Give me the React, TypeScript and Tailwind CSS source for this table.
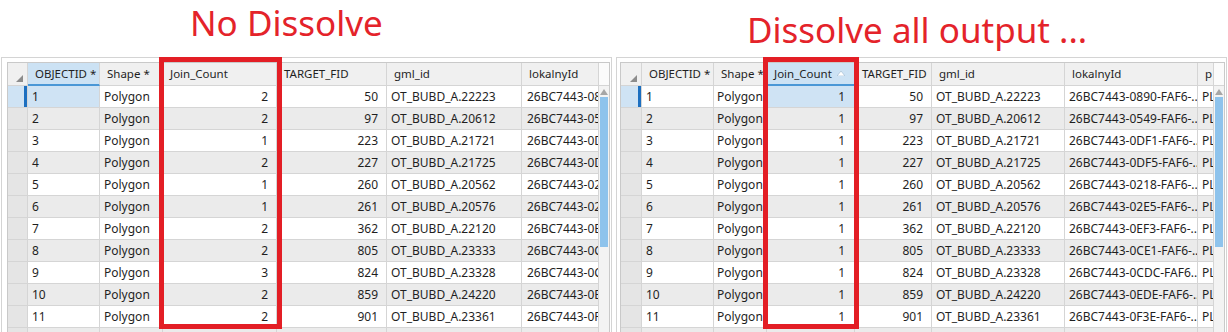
import React from "react";

type Col = {
  key: string;
  w: string;
  h?: string;
  align?: "l" | "r";
  clipRight?: boolean;
  pad?: string;
};

type Row = {
  oid: string;
  shape: string;
  jc: string;
  tfid: string;
  gml: string;
  lok: string;
  p: string;
};

const base: Omit<Row, "jc">[] = [
  { oid: "1", shape: "Polygon", tfid: "50", gml: "OT_BUBD_A.22223", lok: "26BC7443-0890-FAF6-...", p: "PL" },
  { oid: "2", shape: "Polygon", tfid: "97", gml: "OT_BUBD_A.20612", lok: "26BC7443-0549-FAF6-...", p: "PL" },
  { oid: "3", shape: "Polygon", tfid: "223", gml: "OT_BUBD_A.21721", lok: "26BC7443-0DF1-FAF6-...", p: "PL" },
  { oid: "4", shape: "Polygon", tfid: "227", gml: "OT_BUBD_A.21725", lok: "26BC7443-0DF5-FAF6-...", p: "PL" },
  { oid: "5", shape: "Polygon", tfid: "260", gml: "OT_BUBD_A.20562", lok: "26BC7443-0218-FAF6-...", p: "PL" },
  { oid: "6", shape: "Polygon", tfid: "261", gml: "OT_BUBD_A.20576", lok: "26BC7443-02E5-FAF6-...", p: "PL" },
  { oid: "7", shape: "Polygon", tfid: "362", gml: "OT_BUBD_A.22120", lok: "26BC7443-0EF3-FAF6-...", p: "PL" },
  { oid: "8", shape: "Polygon", tfid: "805", gml: "OT_BUBD_A.23333", lok: "26BC7443-0CE1-FAF6-...", p: "PL" },
  { oid: "9", shape: "Polygon", tfid: "824", gml: "OT_BUBD_A.23328", lok: "26BC7443-0CDC-FAF6...", p: "PL" },
  { oid: "10", shape: "Polygon", tfid: "859", gml: "OT_BUBD_A.24220", lok: "26BC7443-0EDE-FAF6-...", p: "PL" },
  { oid: "11", shape: "Polygon", tfid: "901", gml: "OT_BUBD_A.23361", lok: "26BC7443-0F3E-FAF6-...", p: "PL" },
  { oid: "", shape: "", tfid: "", gml: "", lok: "", p: "" },
];

const leftJc = ["2", "2", "1", "2", "1", "1", "2", "2", "3", "2", "2", ""];

const leftRows: Row[] = base.map((r, i) => ({ ...r, jc: leftJc[i] }));
const rightRows: Row[] = base.map((r, i) => ({ ...r, jc: i < 11 ? "1" : "" }));

const leftCols: Col[] = [
  { key: "oid", w: "w-[72px]", h: "OBJECTID *", pad: "px-[4px]" },
  { key: "shape", w: "w-[63px]", h: "Shape *", pad: "px-[4px]" },
  { key: "jc", w: "w-[114px]", h: "Join_Count", align: "r", pad: "justify-end pr-[8px] pl-[4px]" },
  { key: "tfid", w: "w-[110px]", h: "TARGET_FID", align: "r", pad: "justify-end pr-[8px] pl-[4px]" },
  { key: "gml", w: "w-[135px]", h: "gml_id", pad: "px-[4px]" },
  { key: "lok", w: "w-[77px]", h: "lokalnyId", clipRight: true, pad: "pl-[5px]" },
];

const rightCols: Col[] = [
  { key: "oid", w: "w-[72px]", h: "OBJECTID *", pad: "px-[4px]" },
  { key: "shape", w: "w-[53px]", h: "Shape *", pad: "pl-[3px]" },
  { key: "jc", w: "w-[88px]", h: "Join_Count", align: "r", pad: "justify-end pr-[9px] pl-[4px]" },
  { key: "tfid", w: "w-[77px]", h: "TARGET_FID", align: "r", pad: "justify-end pr-[8px] pl-[4px]" },
  { key: "gml", w: "w-[133px]", h: "gml_id", pad: "px-[4px]" },
  { key: "lok", w: "w-[133px]", h: "lokalnyId", pad: "px-[4px]" },
  { key: "p", w: "w-[16px]", h: "p", clipRight: true, pad: "pl-[4px]" },
];

function CornerTriangle() {
  return (
    <svg width="7" height="7" viewBox="0 0 7 7" className="absolute right-[4px] bottom-[3px]">
      <polygon points="0,7 7,7 7,0" fill="#8c8c8c" />
    </svg>
  );
}

function SortArrow() {
  return (
    <svg width="8" height="5" viewBox="0 0 8 5" className="ml-[5px] mb-[1px] shrink-0">
      <polygon points="0,5 8,5 4,0" fill="#ffffff" stroke="#9bb7cf" strokeWidth="0.6" />
    </svg>
  );
}

function Table({
  cols,
  rows,
  activeKey,
  selW,
  sorted,
}: {
  cols: Col[];
  rows: Row[];
  activeKey: string;
  selW: string;
  sorted?: boolean;
}) {
  return (
    <div className="flex flex-col">
      {/* header */}
      <div className="flex h-[23px] text-[11.5px]">
        <div className={`${selW} shrink-0 relative bg-[#f0f0f0] border-r border-b border-[#d5d5d5]`}>
          <CornerTriangle />
        </div>
        {cols.map((c) => {
          const active = c.key === activeKey;
          return (
            <div
              key={c.key}
              className={`${c.w} shrink-0 flex items-center overflow-hidden whitespace-nowrap border-r ${
                active
                  ? "bg-[#cce2f4] border-b-2 border-b-[#4a97d6] border-r-[#d5d5d5]"
                  : "bg-[#f0f0f0] border-b border-[#d5d5d5]"
              } ${c.clipRight ? "pl-[7px]" : "px-[7px]"}`}
            >
              <span>{c.h}</span>
              {active && sorted ? <SortArrow /> : null}
            </div>
          );
        })}
        <div className="w-[10px] shrink-0 bg-[#fbfbfb] border-b border-[#d5d5d5]" />
      </div>
      {/* body */}
      <div className="flex text-[12px]">
        <div className="flex flex-col">
          {rows.map((r, i) => {
            const even = i % 2 === 1;
            const first = i === 0;
            return (
              <div
                key={i}
                className={`flex h-[22px] border-b border-[#d5d5d5] ${even ? "bg-[#ebebeb]" : "bg-white"}`}
              >
                <div
                  className={`${selW} shrink-0 flex justify-end border-r border-[#d5d5d5] ${
                    first ? "bg-[#cfe3f4]" : "bg-[#e5e5e5]"
                  }`}
                >
                  {first ? <div className="w-[3px] h-full bg-[#1c6fc0]" /> : null}
                </div>
                {cols.map((c) => {
                  const activeCell = first && c.key === activeKey;
                  const val = (r as unknown as Record<string, string>)[c.key];
                  return (
                    <div
                      key={c.key}
                      className={`${c.w} shrink-0 flex items-center overflow-hidden whitespace-nowrap border-r border-[#d5d5d5] ${c.pad} ${
                        activeCell ? "bg-[#cfe3f4]" : ""
                      }`}
                    >
                      {val}
                    </div>
                  );
                })}
              </div>
            );
          })}
        </div>
        {/* scrollbar */}
        <div className="w-[10px] shrink-0 bg-[#f3f3f3] flex flex-col items-center pt-[3px]">
          <svg width="8" height="6" viewBox="0 0 8 6">
            <polygon points="0,6 8,6 4,0" fill="#a6a6a6" />
          </svg>
          <div className="mt-[2px] w-[8px] h-[150px] bg-[#8ec3ec]" />
        </div>
      </div>
    </div>
  );
}

export default function App() {
  return (
    <div
      className="relative w-[1228px] h-[332px] overflow-hidden bg-white text-[#1f1f1f]"
      style={{ fontFamily: '"Noto Sans", "Open Sans", sans-serif' }}
    >
      {/* titles */}
      <div className="flex h-[57px] text-[35px] leading-[35px] text-[#e4232a]">
        <div className="w-[616px] shrink-0 pl-[190px] pt-[5px]">No Dissolve</div>
        <div className="pl-[131px] pt-[12px]">Dissolve all output ...</div>
      </div>
      {/* tables */}
      <div className="flex">
        <div className="ml-[1px] w-[611px] shrink-0 border border-[#d4d4d4] pl-[5px] pt-[4px] pr-[1px]">
          <div className="border-l border-t border-r border-[#c9c9c9]">
            <Table cols={leftCols} rows={leftRows} activeKey="oid" selW="w-[20px]" />
          </div>
        </div>
        <div className="ml-[4px] w-[611px] shrink-0 border border-[#d4d4d4] pl-[3px] pt-[4px] pr-[1px]">
          <div className="border-l border-t border-r border-[#c9c9c9]">
            <Table cols={rightCols} rows={rightRows} activeKey="jc" selW="w-[21px]" sorted />
          </div>
        </div>
      </div>
      {/* red annotation boxes */}
      <div className="absolute left-[159px] top-[57px] w-[123px] h-[272px] border-[5px] border-[#e31e25]" />
      <div className="absolute left-[763px] top-[57px] w-[96px] h-[272px] border-[5px] border-[#e31e25]" />
    </div>
  );
}
